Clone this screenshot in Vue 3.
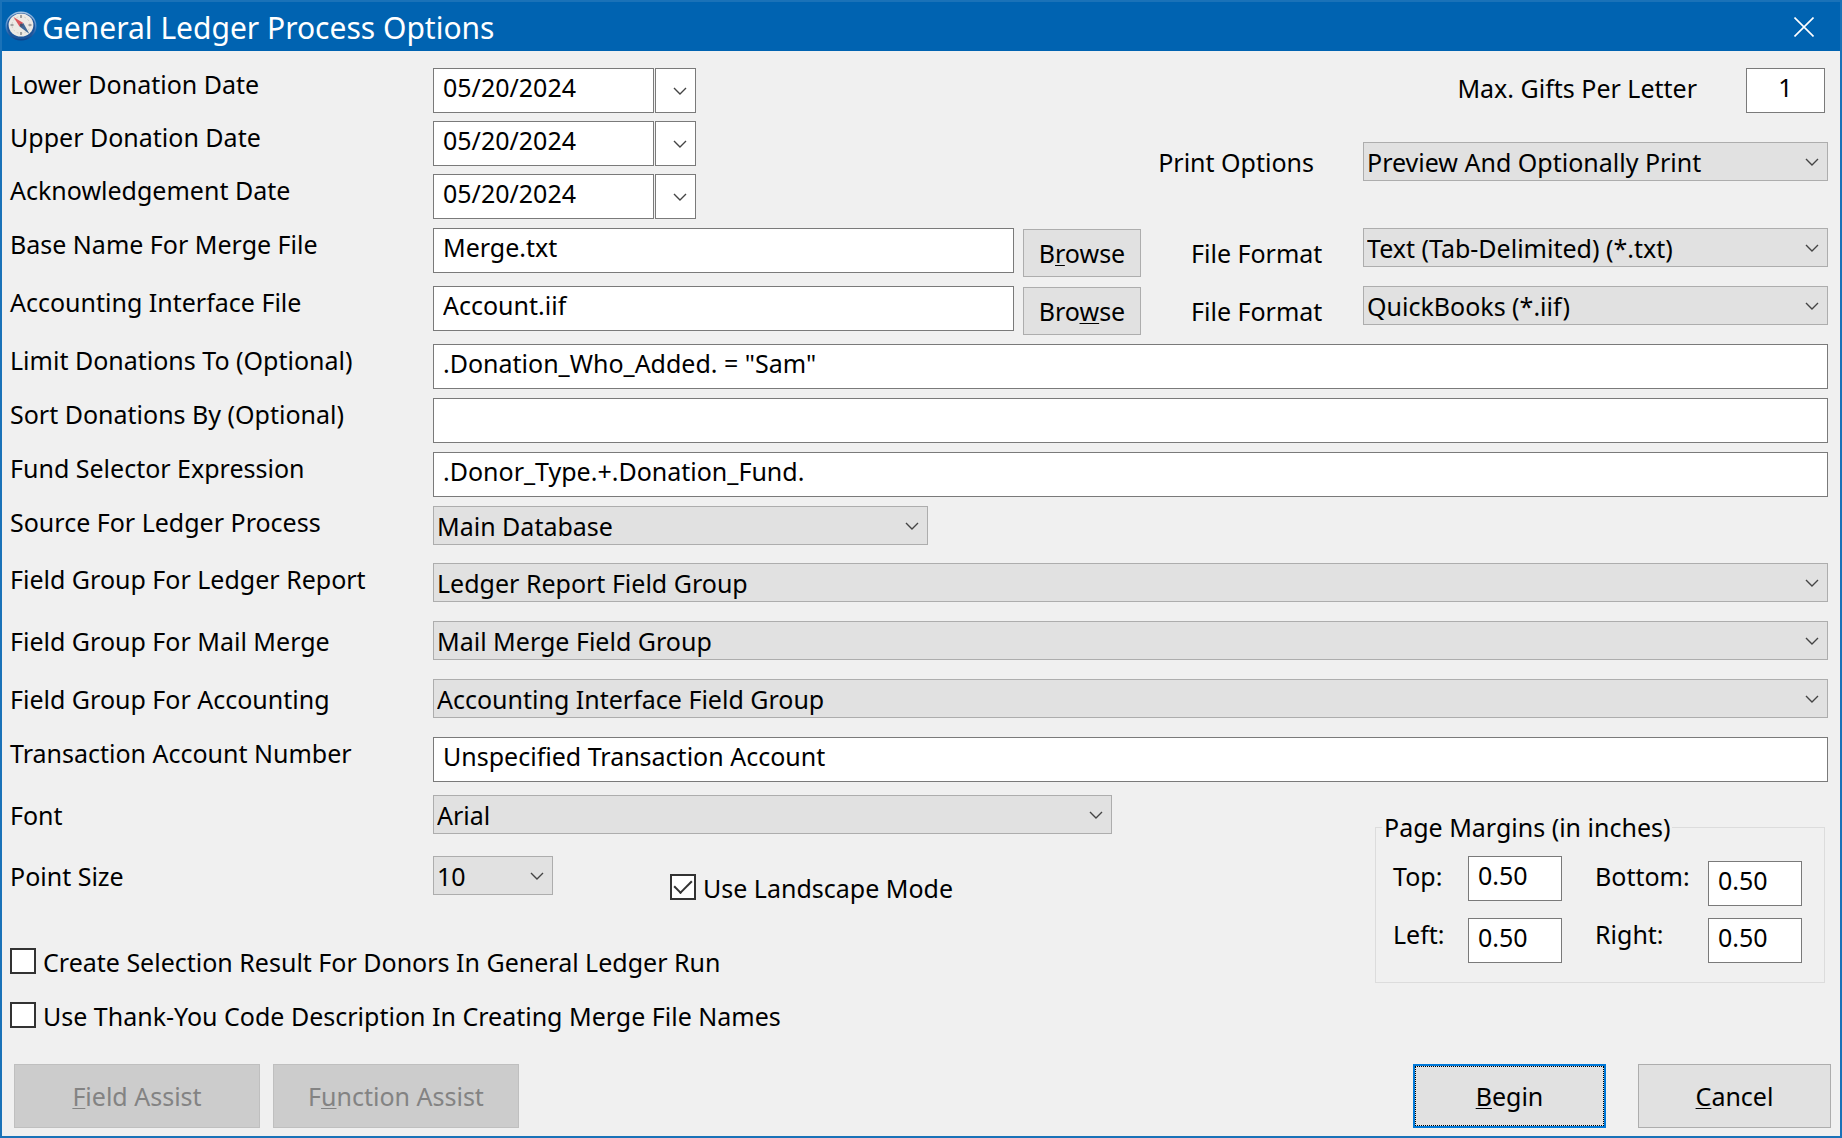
<script setup>
import { reactive, h } from 'vue'

const form = reactive({
  lower: '05/20/2024',
  upper: '05/20/2024',
  ack: '05/20/2024',
  maxGifts: '1',
  limit: '.Donation_Who_Added. = "Sam"',
  sort: '',
  fund: '.Donor_Type.+.Donation_Fund.',
  account: 'Unspecified Transaction Account',
  landscape: true,
  createSelection: false,
  thankYou: false,
})

const dates = [
  { key: 'lower', label: 'Lower Donation Date' },
  { key: 'upper', label: 'Upper Donation Date' },
  { key: 'ack', label: 'Acknowledgement Date' },
]

const files = reactive([
  { id: 'merge', label: 'Base Name For Merge File', value: 'Merge.txt', key: ['B', 'r', 'owse'], format: 'Text (Tab-Delimited) (*.txt)' },
  { id: 'iface', label: 'Accounting Interface File', value: 'Account.iif', key: ['Bro', 'w', 'se'], format: 'QuickBooks (*.iif)' },
])

const expressions = [
  { key: 'limit', label: 'Limit Donations To (Optional)' },
  { key: 'sort', label: 'Sort Donations By (Optional)' },
  { key: 'fund', label: 'Fund Selector Expression' },
]

const groups = [
  { id: 'ledger', label: 'Field Group For Ledger Report', value: 'Ledger Report Field Group' },
  { id: 'mail', label: 'Field Group For Mail Merge', value: 'Mail Merge Field Group', low: true },
  { id: 'acct', label: 'Field Group For Accounting', value: 'Accounting Interface Field Group', low: true },
]

const margins = reactive([
  { id: 'top', label: 'Top:', value: '0.50', low: true },
  { id: 'bottom', label: 'Bottom:', value: '0.50', low: true },
  { id: 'left', label: 'Left:', value: '0.50' },
  { id: 'right', label: 'Right:', value: '0.50' },
])

const Chevron = () =>
  h('svg', { width: 14, height: 8, viewBox: '0 0 14 8', 'aria-hidden': 'true' }, [
    h('path', { d: 'M1 1 L7 7 L13 1', fill: 'none', stroke: '#444', 'stroke-width': 1.4 }),
  ])
</script>

<template>
  <main class="dialog">
    <header class="titlebar">
      <svg class="compass" width="32" height="30" viewBox="0 0 32 30" aria-hidden="true">
        <defs>
          <linearGradient id="ring" x1="0" y1="0" x2="0" y2="1">
            <stop offset="0" stop-color="#a9c6e4" />
            <stop offset="0.5" stop-color="#4b86c6" />
            <stop offset="1" stop-color="#0c3f86" />
          </linearGradient>
        </defs>
        <ellipse cx="16" cy="15" rx="15.5" ry="14.5" fill="url(#ring)" />
        <ellipse cx="16" cy="15" rx="14" ry="13" fill="#1d559b" />
        <ellipse cx="16" cy="14" rx="12.4" ry="11.6" fill="#ece9e4" />
        <ellipse cx="16" cy="14" rx="9" ry="8.4" fill="none" stroke="#d2cec8" stroke-dasharray="2 2" />
        <path d="M16 4v3M16 21v3M5.500 14h3M23.500 14h3" stroke="#8a8a8a" stroke-width="1.500" />
        <path d="M8.500 6 L18.300 12 L14.500 15.500 Z" fill="#d9545a" />
        <path d="M24.500 23 L14.500 15.500 L18.300 12 Z" fill="#3f6796" />
        <circle cx="16.300" cy="14" r="1.500" fill="#44506a" />
      </svg>
      <h1>General Ledger Process Options</h1>
      <button class="close" type="button" aria-label="Close">
        <svg width="20" height="20" viewBox="0 0 20 20" aria-hidden="true">
          <path d="M0.500 0.500 L19.500 19.500 M19.500 0.500 L0.500 19.500" stroke="#fff" stroke-width="1.600" />
        </svg>
      </button>
    </header>

    <form class="body" @submit.prevent>
      <div class="split">
        <div class="dates">
          <div v-for="d in dates" :key="d.key" class="row">
            <label class="name" :for="d.key">{{ d.label }}</label>
            <div class="date">
              <input :id="d.key" v-model="form[d.key]" type="text" />
              <button type="button" :aria-label="'Choose ' + d.label"><Chevron /></button>
            </div>
          </div>
        </div>
        <div class="print">
          <div class="gifts">
            <label class="low" for="gifts">Max. Gifts Per Letter</label>
            <input id="gifts" v-model="form.maxGifts" type="text" />
          </div>
          <div class="options">
            <label for="print">Print Options</label>
            <div class="select side">
              <select id="print"><option>Preview And Optionally Print</option></select>
              <Chevron />
            </div>
          </div>
        </div>
      </div>

      <div class="files">
        <div v-for="f in files" :key="f.id" class="row">
          <label class="name" :for="f.id">{{ f.label }}</label>
          <input :id="f.id" v-model="f.value" class="grow" type="text" />
          <button class="button browse" type="button">{{ f.key[0] }}<u>{{ f.key[1] }}</u>{{ f.key[2] }}</button>
          <label class="format" :for="f.id + '-format'">File Format</label>
          <div class="select side">
            <select :id="f.id + '-format'"><option>{{ f.format }}</option></select>
            <Chevron />
          </div>
        </div>
      </div>

      <div class="expressions">
        <div v-for="e in expressions" :key="e.key" class="row">
          <label class="name" :for="e.key">{{ e.label }}</label>
          <input :id="e.key" v-model="form[e.key]" class="grow" type="text" />
        </div>
        <div class="row">
          <label class="name" for="source">Source For Ledger Process</label>
          <div class="select source">
            <select id="source"><option>Main Database</option></select>
            <Chevron />
          </div>
        </div>
      </div>

      <div class="groups">
        <div v-for="g in groups" :key="g.id" class="row">
          <label class="name" :class="{ low: g.low }" :for="g.id">{{ g.label }}</label>
          <div class="select grow">
            <select :id="g.id"><option>{{ g.value }}</option></select>
            <Chevron />
          </div>
        </div>
        <div class="row">
          <label class="name" for="account">Transaction Account Number</label>
          <input id="account" v-model="form.account" class="grow" type="text" />
        </div>
      </div>

      <div class="split lower">
        <div class="settings">
          <div class="row">
            <label class="name low" for="font">Font</label>
            <div class="select font">
              <select id="font"><option>Arial</option></select>
              <Chevron />
            </div>
          </div>
          <div class="row">
            <label class="name low" for="size">Point Size</label>
            <div class="select size">
              <select id="size"><option>10</option></select>
              <Chevron />
            </div>
            <label class="check landscape">
              <input v-model="form.landscape" type="checkbox" />
              <span>Use Landscape Mode</span>
            </label>
          </div>
          <div class="checks">
            <label class="check">
              <input v-model="form.createSelection" type="checkbox" />
              <span>Create Selection Result For Donors In General Ledger Run</span>
            </label>
            <label class="check">
              <input v-model="form.thankYou" type="checkbox" />
              <span>Use Thank-You Code Description In Creating Merge File Names</span>
            </label>
          </div>
        </div>
        <fieldset class="margins">
          <legend>Page Margins (in inches)</legend>
          <div class="margin-grid">
            <template v-for="m in margins" :key="m.id">
              <label :class="{ low: m.low }" :for="'margin-' + m.id">{{ m.label }}</label>
              <input :id="'margin-' + m.id" v-model="m.value" :class="m.id" type="text" />
            </template>
          </div>
        </fieldset>
      </div>

      <footer class="actions">
        <button class="button wide" type="button" disabled><u>F</u>ield Assist</button>
        <button class="button wide" type="button" disabled>F<u>u</u>nction Assist</button>
        <button class="button begin" type="submit"><u>B</u>egin</button>
        <button class="button" type="button"><u>C</u>ancel</button>
      </footer>
    </form>
  </main>
</template>

<style>
body {
  margin: 0;
}
</style>

<style scoped>
.dialog {
  box-sizing: border-box;
  min-height: 100vh;
  display: flex;
  flex-direction: column;
  border: 2px solid #1a72b8;
  background: #f0f0f0;
  color: #000;
  font: 25px/32px "Noto Sans", sans-serif;
}
.dialog *,
.dialog :deep(*) {
  box-sizing: border-box;
}
.titlebar {
  display: flex;
  align-items: center;
  height: 49px;
  padding: 0 24px 0 3px;
  background: #0063b1;
  color: #fff;
}
.compass {
  margin-bottom: 2px;
}
h1 {
  flex: 1;
  margin: 0 0 0 5px;
  padding-top: 2px;
  font: 400 30px/40px "Noto Sans", sans-serif;
}
.close {
  display: flex;
  padding: 0 2px;
  border: 0;
  background: none;
}
.body {
  flex: 1;
  display: flex;
  flex-direction: column;
  padding: 17px 12px 8px 8px;
}
.row {
  display: flex;
  align-items: flex-start;
}
.name {
  flex: none;
  width: 423px;
}
.low {
  padding-top: 4px;
}
.grow {
  flex: 1;
  min-width: 0;
}
input[type="text"] {
  height: 45px;
  padding: 0 9px 8px;
  border: 1px solid #7a7a7a;
  border-radius: 0;
  outline: 0;
  background: #fff;
  color: #000;
  font: inherit;
}
.select {
  display: grid;
  align-items: center;
}
.select > * {
  grid-area: 1 / 1;
}
.select > svg {
  justify-self: end;
  margin-right: 9px;
  pointer-events: none;
}
select {
  appearance: none;
  width: 100%;
  height: 39px;
  padding: 0 32px 0 3px;
  border: 1px solid #adadad;
  border-radius: 0;
  background: #e1e1e1;
  color: #000;
  font: inherit;
}
.side {
  width: 465px;
}
.source {
  width: 495px;
}
.font {
  width: 679px;
}
.size {
  width: 120px;
}
.split {
  display: flex;
  justify-content: space-between;
}
.dates {
  display: flex;
  flex-direction: column;
  gap: 8px;
}
.date {
  display: flex;
  gap: 1px;
}
.date input {
  width: 221px;
}
.date button {
  display: flex;
  align-items: center;
  justify-content: flex-end;
  width: 41px;
  padding: 0 8px 0 0;
  border: 1px solid #7a7a7a;
  background: #fff;
}
.print {
  display: flex;
  flex-direction: column;
  align-items: flex-end;
  gap: 29px;
}
.gifts,
.options {
  display: flex;
  align-items: center;
  gap: 49px;
}
.gifts {
  align-items: flex-start;
  padding-right: 3px;
}
.gifts input {
  width: 79px;
  text-align: center;
}
.files {
  display: flex;
  flex-direction: column;
  gap: 13px;
  margin-top: 9px;
}
.files .row {
  height: 45px;
}
.button {
  width: 193px;
  height: 64px;
  padding: 0;
  border: 1px solid #adadad;
  border-radius: 0;
  background: #e1e1e1;
  color: #000;
  font: inherit;
}
.button u {
  text-decoration-thickness: 1px;
  text-underline-offset: 2px;
  text-decoration-skip-ink: none;
}
.button:disabled {
  border-color: #bfbfbf;
  background: #ccc;
  color: #838383;
}
.browse {
  width: 118px;
  height: 48px;
  margin: 1px 0 0 9px;
}
.format {
  width: 172px;
  margin-left: 50px;
  padding-top: 9px;
}
.expressions {
  display: flex;
  flex-direction: column;
  gap: 9px;
  margin-top: 13px;
}
.groups {
  display: flex;
  flex-direction: column;
  gap: 19px;
  margin-top: 18px;
}
.lower {
  margin-top: 13px;
}
.settings {
  display: flex;
  flex-direction: column;
  gap: 22px;
}
.check {
  display: flex;
  align-items: flex-start;
  gap: 7px;
}
.check input {
  appearance: none;
  display: grid;
  place-items: center;
  width: 26px;
  height: 26px;
  margin: 0;
  border: 2px solid #333;
  background: #fff;
}
.check span {
  line-height: 28px;
}
.check input:checked::before {
  content: "";
  width: 8px;
  height: 15px;
  margin-bottom: 5px;
  border: solid #333;
  border-width: 0 2px 2px 0;
  transform: rotate(45deg);
}
.landscape {
  margin: 18px 0 0 117px;
}
.checks {
  display: flex;
  flex-direction: column;
  gap: 26px;
  margin-top: 24px;
}
.margins {
  align-self: flex-start;
  width: 450px;
  height: 172px;
  margin: 16px 3px 0 0;
  padding: 13px 22px 0 17px;
  border: 1px solid #dcdcdc;
}
.margins legend {
  margin-left: -11px;
  padding: 0 2px;
}
.margin-grid {
  display: grid;
  grid-template-columns: 75px 94px 1fr 94px;
  gap: 12px 0;
  align-items: start;
}
.margin-grid label:nth-of-type(even) {
  padding-left: 33px;
}
.margin-grid .bottom {
  margin-top: 5px;
}
.actions {
  display: flex;
  gap: 13px;
  margin: auto -3px 0 4px;
}
.wide {
  width: 246px;
}
.begin {
  margin: 0 19px 0 auto;
  border: 2px solid #0078d7;
  outline: 1px dotted #000;
  outline-offset: -3px;
}
</style>
